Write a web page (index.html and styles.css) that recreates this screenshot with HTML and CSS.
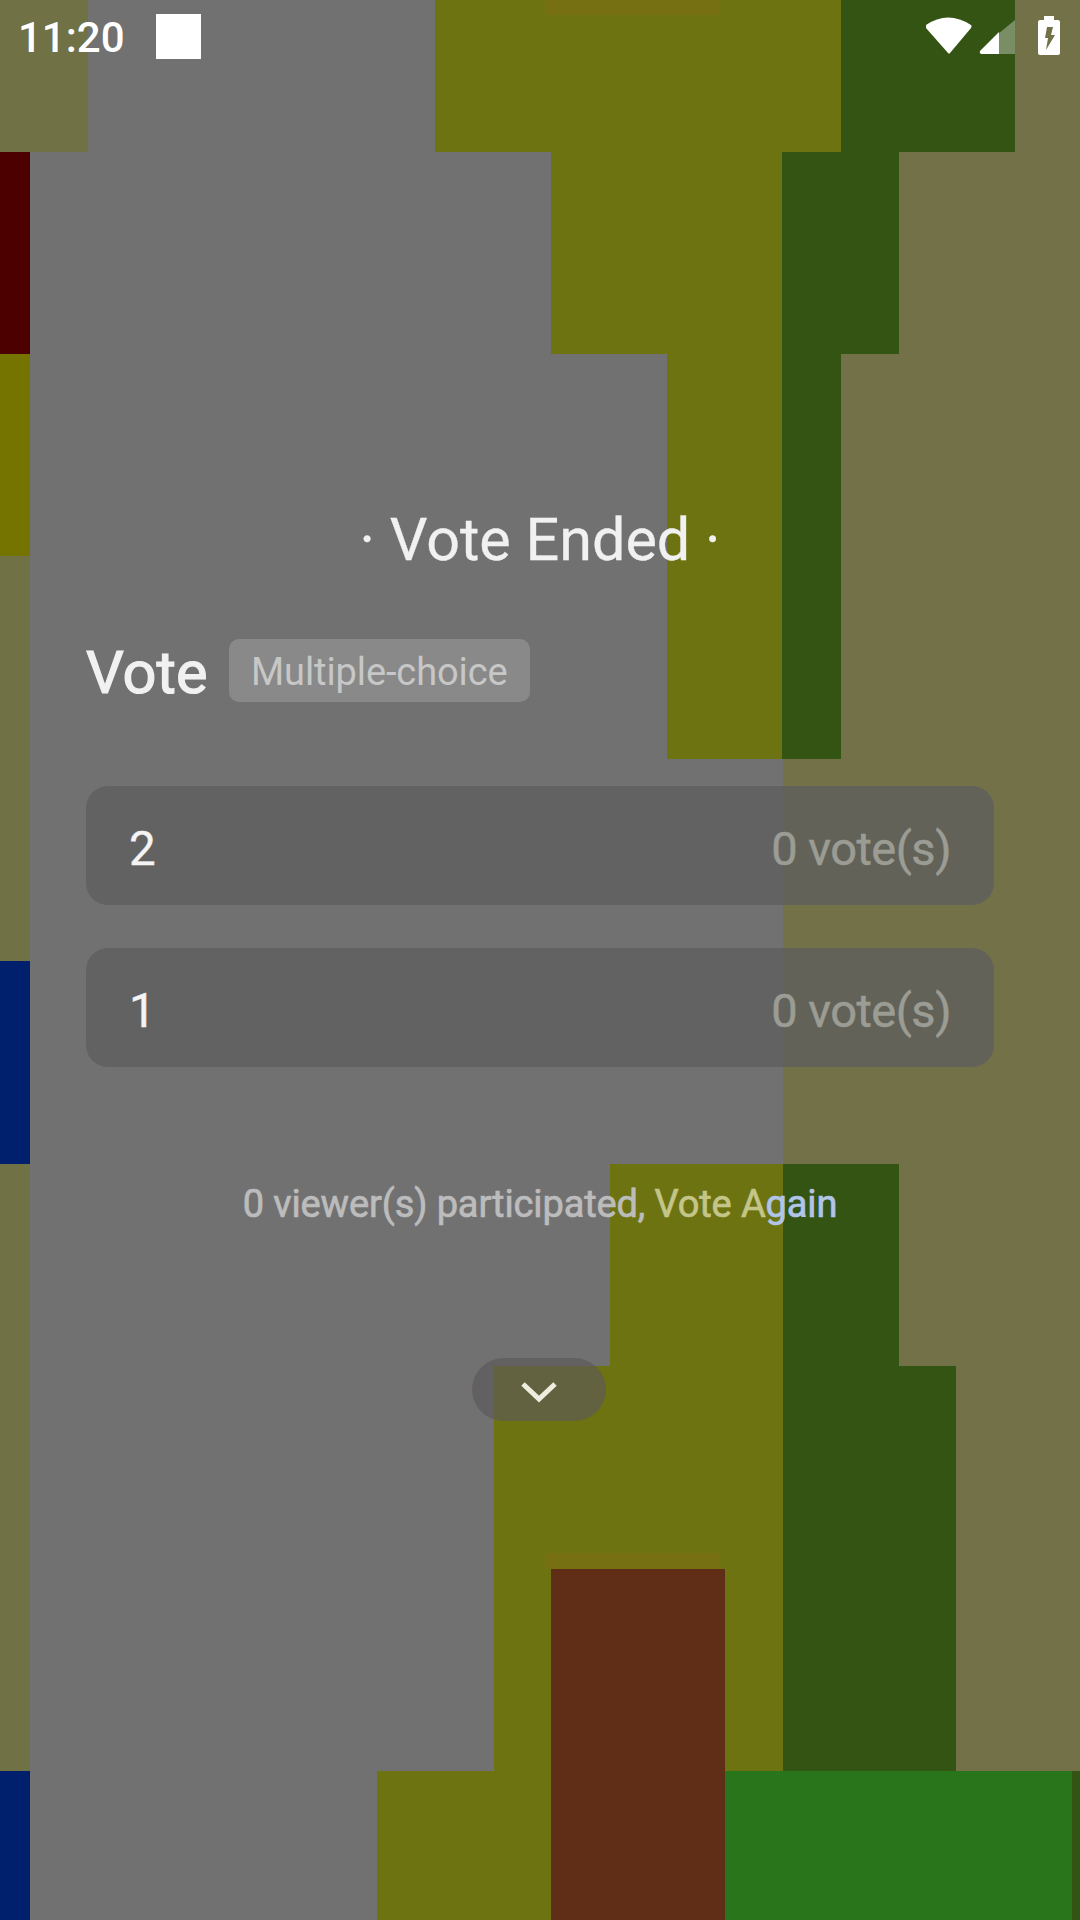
FILE: index.html
```html
<!DOCTYPE html>
<html lang="en">
<head>
<meta charset="utf-8">
<title>Vote</title>
<link rel="stylesheet" href="styles.css">
</head>
<body>
<div class="screen">
  <svg class="backdrop" viewBox="0 0 1080 1920" shape-rendering="crispEdges" aria-hidden="true">
    <rect width="1080" height="1920" fill="#717171"/>
    <!-- left edge -->
    <path fill="#717146" d="M0 0H88V152H0zM0 556H30V961H0zM0 1164H30V1771H0z"/>
    <path fill="#4d0000" d="M0 152H30V354H0z"/>
    <path fill="#757400" d="M0 354H30V556H0z"/>
    <path fill="#00206e" d="M0 961H30V1164H0zM0 1771H30V1920H0z"/>
    <!-- right side -->
    <path fill="#737147" d="M783 0H1080V1771H783z"/>
    <path fill="#345414" d="M841 0H1015V152H899V354H841V759H782V152H841zM783 1164H899V1366H956V1771H783zM1072 1771H1080V1920H1072z"/>
    <path fill="#6e7311" d="M435 0H841V152H782V759H667V354H551V152H435zM610 1164H783V1771H725V1920H377V1771H494V1366H610z"/>
    <path fill="#777012" d="M545 0H720V15H545zM545 1553H720V1569H545z"/>
    <path fill="#602d16" d="M551 1569H725V1920H551z"/>
    <path fill="#28751c" d="M725 1771H1072V1920H725z"/>
  </svg>

  <header class="status">
    <span class="clock">11:20</span>
    <span class="notice"></span>
    <svg class="signals" viewBox="0 0 140 48" aria-hidden="true">
      <path fill="#fff" d="M0 9Q22 -6 45 9Q46 10 45 12L24 37Q23 38 22 37L0 12Q-1 10 0 9z"/>
      <path fill="#fff" fill-opacity=".34" d="M89 4V38H72V18z"/>
      <path fill="#fff" d="M73 16V38H55Q53 37 54 35z"/>
      <path fill="#fff" fill-rule="evenodd" d="M118 0H128V4H132Q134 4 134 6V37Q134 39 132 39H114Q112 39 112 37V6Q112 4 114 4H118zM121 11L119 22H122L120 34L129 19H125L127 11z"/>
    </svg>
  </header>

  <main class="panel">
    <h1 class="title">· Vote Ended ·</h1>
    <div class="subject">
      <h2 class="name">Vote</h2>
      <span class="tag">Multiple-choice</span>
    </div>
    <ul class="options">
      <li class="option"><span class="label">2</span><span class="count">0 vote(s)</span></li>
      <li class="option"><span class="label">1</span><span class="count">0 vote(s)</span></li>
    </ul>
    <p class="summary">0 viewer(s) participated, <a class="again">Vote A<span class="again-end">gain</span></a></p>
    <button class="collapse" aria-label="Collapse">
      <svg class="chevron" viewBox="0 0 36 22"><path d="M2 2L18 17L34 2" fill="none" stroke="#eeeedf" stroke-width="5"/></svg>
    </button>
  </main>
</div>
</body>
</html>
```
FILE: styles.css
```css
* { box-sizing: border-box; }
body {
  margin: 0;
  font-family: Roboto, sans-serif;
  color: #f1f1f1;
}
.screen {
  position: relative;
  width: 1080px;
  height: 1920px;
  overflow: hidden;
}
.backdrop {
  position: absolute;
  inset: 0;
  width: 1080px;
  height: 1920px;
  z-index: -1;
}
.status {
  display: flex;
  align-items: center;
  height: 72px;
  padding: 1px 14px 0 18px;
}
.clock {
  width: 138px;
  font-size: 42px;
  font-weight: 500;
  line-height: 48px;
  color: #fff;
  padding-top: 2px;
}
.notice {
  width: 45px;
  height: 45px;
  background: #fff;
}
.signals {
  width: 140px;
  height: 48px;
  margin-left: auto;
  margin-top: 6px;
}
.panel {
  display: flex;
  flex-direction: column;
  padding: 430px 86px 0;
}
.title {
  margin: 0;
  font-size: 59.3px;
  font-weight: 400;
  line-height: 76px;
  text-align: center;
  -webkit-text-stroke: .3px currentColor;
}
.subject {
  display: flex;
  align-items: center;
  gap: 22px;
  height: 64px;
  margin-top: 60px;
}
.name {
  width: 121px;
  margin: 0;
  padding-top: 6px;
  font-size: 59.5px;
  font-weight: 400;
  line-height: 64px;
  -webkit-text-stroke: 1.2px currentColor;
}
.tag {
  height: 63px;
  padding: 0 22px;
  border-radius: 10px;
  background: #898989;
  color: #c7c7c7;
  font-size: 38px;
  line-height: 66px;
  letter-spacing: -.1px;
}
.options {
  display: flex;
  flex-direction: column;
  gap: 43px;
  margin: 84px 0 0;
  padding: 0;
  list-style: none;
}
.option {
  display: flex;
  align-items: center;
  justify-content: space-between;
  height: 119px;
  padding: 6px 43px 0;
  border-radius: 22px;
  background: rgba(93, 93, 94, .78);
  font-size: 47.5px;
}
.label {
  color: #f4f4f4;
  -webkit-text-stroke: .4px currentColor;
}
.count {
  margin-top: -1px;
  color: #9b9c94;
  font-size: 47px;
  letter-spacing: -.5px;
  -webkit-text-stroke: .5px currentColor;
}
.summary {
  margin: 112px 0 0;
  font-size: 38px;
  line-height: 50px;
  letter-spacing: -.12px;
  text-align: center;
  color: #bcbcbc;
  -webkit-text-stroke: .7px currentColor;
}
.again { color: #c4c589; -webkit-text-stroke-color: #c4c589; }
.again-end { color: #b0c5e8; -webkit-text-stroke-color: #b0c5e8; }
.collapse {
  display: flex;
  align-items: center;
  justify-content: center;
  align-self: center;
  width: 134px;
  height: 63px;
  margin: 129px 2px 0 0;
  padding: 6px 0 0;
  border: 0;
  border-radius: 32px;
  background: rgba(92, 88, 90, .65);
}
.chevron {
  width: 36px;
  height: 22px;
}
```
